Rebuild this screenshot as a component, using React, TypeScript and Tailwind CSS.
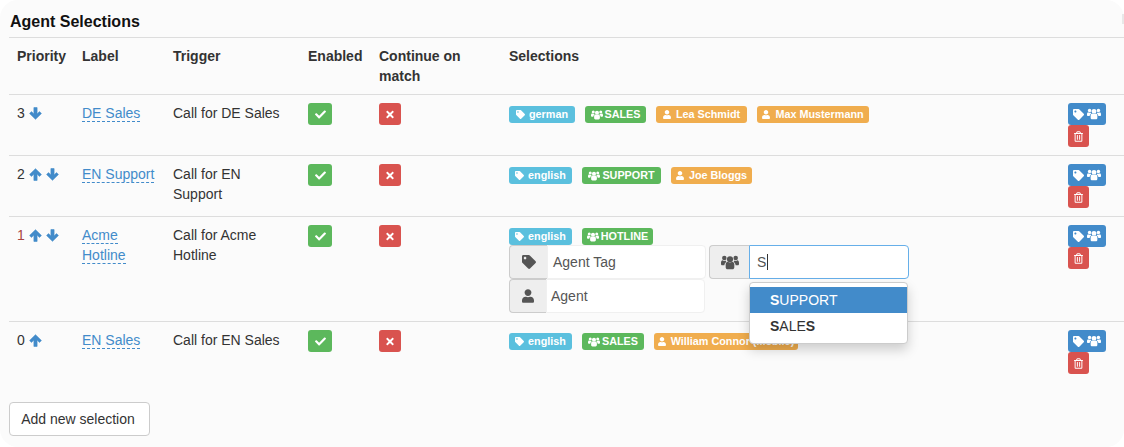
import React from "react";
import { FaTag, FaUser, FaCheck, FaTimes, FaRegTrashAlt } from "react-icons/fa";

function Users({ className }: { className?: string }) {
  return (
    <svg viewBox="0 0 20 16" className={className} fill="currentColor">
      <circle cx="10" cy="4.4" r="3.4" />
      <circle cx="3.7" cy="3" r="2.5" />
      <circle cx="16.300" cy="3" r="2.5" />
      <path d="M5.200 10.200c0-1.900 1.200-3 2.500-3 .6.500 1.400.900 2.300.900s1.700-.4 2.300-.9c1.300 0 2.500 1.100 2.500 3v3c0 1.400-.9 2.300-2.200 2.300H7.400c-1.300 0-2.200-.9-2.200-2.300z" />
      <path d="M0 8.400C0 6.500.8 5.400 1.800 5.400c.6.500 1.300.8 2 .8.500 0 1-.1 1.400-.3.1.6.4 1.200.8 1.600-1.200.5-2.100 1.800-2.200 3.500H1.400C.6 11 0 10.400 0 9.600z" />
      <path d="M20 8.400c0-1.900-.8-3-1.800-3-.6.500-1.300.8-2 .8-.5 0-1-.1-1.400-.3-.1.6-.4 1.200-.8 1.600 1.200.5 2.100 1.800 2.200 3.500h2.400c.8 0 1.400-.6 1.400-1.400z" />
    </svg>
  );
}

function ArrowUp({ className }: { className?: string }) {
  return (
    <svg viewBox="0 0 13 13" className={className} fill="currentColor" stroke="currentColor" strokeWidth="0.6" strokeLinejoin="round">
      <path d="M6.500 0.700 12.400 6.500 10.500 8.400 8.100 6V12.400H4.900V6L2.500 8.400 0.600 6.500Z" />
    </svg>
  );
}

function ArrowDown({ className }: { className?: string }) {
  return (
    <svg viewBox="0 0 13 13" className={className} fill="currentColor" stroke="currentColor" strokeWidth="0.6" strokeLinejoin="round">
      <path d="M6.500 12.300 12.400 6.500 10.500 4.600 8.100 7V0.600H4.900V7L2.500 4.600 0.600 6.500Z" />
    </svg>
  );
}

type Kind = "tag" | "group" | "agent";

function Label({ kind, text, w }: { kind: Kind; text: string; w: string }) {
  const bg = kind === "tag" ? "bg-[#5bc0de]" : kind === "group" ? "bg-[#5cb85c]" : "bg-[#f0ad4e]";
  return (
    <span className={`inline-flex h-[17px] items-center justify-center rounded-[3px] text-[10.8px] leading-none font-bold whitespace-nowrap text-white ${bg} ${w}`}>
      {kind === "tag" && <FaTag className="mr-[4px] h-[9px] w-[9px]" />}
      {kind === "group" && <Users className="mr-[2px] h-[10px] w-[12px]" />}
      {kind === "agent" && <FaUser className="mr-[5px] h-[9px] w-[8px]" />}
      {text}
    </span>
  );
}

function Check() {
  return (
    <span className="flex h-[22px] w-[24px] items-center justify-center rounded-[3px] bg-[#5cb85c] text-white">
      <FaCheck className="h-[11px] w-[11px]" />
    </span>
  );
}

function Cross() {
  return (
    <span className="flex h-[22px] w-[22px] items-center justify-center rounded-[3px] bg-[#d9534f] text-white">
      <FaTimes className="h-[11px] w-[10px]" />
    </span>
  );
}

function Actions() {
  return (
    <div className="flex flex-col items-start">
      <span className="flex h-[22px] w-[38px] items-center justify-center gap-[3px] rounded-[3px] bg-[#428bca] text-white">
        <FaTag className="h-[11px] w-[11px]" />
        <Users className="h-[12px] w-[14px]" />
      </span>
      <span className="flex h-[22px] w-[21px] items-center justify-center rounded-[3px] bg-[#d9534f] text-white">
        <FaRegTrashAlt className="h-[11px] w-[9px]" />
      </span>
    </div>
  );
}

function Priority({ n, up, down, red }: { n: number; up?: boolean; down?: boolean; red?: boolean }) {
  return (
    <div className="flex h-5 items-center">
      <span className={red ? "text-[#a94442]" : ""}>{n}</span>
      {up && <ArrowUp className="ml-[4px] h-[13px] w-[13px] text-[#428bca]" />}
      {down && <ArrowDown className="ml-[4px] h-[13px] w-[13px] text-[#428bca]" />}
    </div>
  );
}

function Editable({ children }: { children: React.ReactNode }) {
  return <a className="border-b border-dashed border-[#428bca] text-[#428bca]">{children}</a>;
}

function InputGroup({ icon, text, focus, width, addon, pad }: { icon: React.ReactNode; text: React.ReactNode; focus?: boolean; width: string; addon: string; pad: string }) {
  return (
    <div className={`flex h-[34px] ${width}`}>
      <span className={`flex shrink-0 items-center justify-center rounded-l-[4px] border border-r-0 border-[#ccc] bg-[#eee] text-[#555] ${addon}`}>
        {icon}
      </span>
      <div className={`flex flex-1 items-center rounded-r-[4px] border bg-white text-[#555] ${pad} ${focus ? "border-[#66afe9]" : "border-[#f0f0f0]"}`}>
        {text}
      </div>
    </div>
  );
}

const rows = [
  {
    p: <Priority n={3} down />, label: "DE Sales", trigger: "Call for DE Sales", h: "h-[61px]",
    tags: [["tag", "german", "w-[66px]"], ["group", "SALES", "w-[61px]"], ["agent", "Lea Schmidt", "w-[91px]"], ["agent", "Max Mustermann", "w-[112px]"]] as [Kind, string, string][],
  },
  {
    p: <Priority n={2} up down />, label: "EN Support", trigger: "Call for EN Support", h: "h-[61px]",
    tags: [["tag", "english", "w-[63px]"], ["group", "SUPPORT", "w-[79px]"], ["agent", "Joe Bloggs", "w-[81px]"]] as [Kind, string, string][],
  },
  {
    p: <Priority n={1} up down red />, label: "Acme Hotline", trigger: "Call for Acme Hotline", h: "h-[105px]", editor: true,
    tags: [["tag", "english", "w-[63px]"], ["group", "HOTLINE", "w-[71px]"]] as [Kind, string, string][],
  },
  {
    p: <Priority n={0} up />, label: "EN Sales", trigger: "Call for EN Sales", h: "h-[61px]",
    tags: [["tag", "english", "w-[63px]"], ["group", "SALES", "w-[62px]"], ["agent", "William Connor (Mobile)", "w-[144px]"]] as [Kind, string, string][],
  },
];

export default function App() {
  return (
    <div className="h-[447px] w-[1124px] overflow-hidden bg-white font-['Liberation_Sans',sans-serif] text-sm leading-5 text-[#333]">
      <div className="relative flex h-full flex-col rounded-[18px] bg-[#fbfbfb] pt-[12px] pl-[9px]">
        <span className="absolute top-[14px] right-0 h-[10px] w-[2px] bg-[#e8e8e8]" />
        <h3 className="mb-[6px] pl-px text-base leading-[19px] font-bold text-[#111]">Agent Selections</h3>
        <table className="w-[1115px] table-fixed border-collapse">
          <colgroup>
            <col className="w-[65px]" />
            <col className="w-[91px]" />
            <col className="w-[135px]" />
            <col className="w-[71px]" />
            <col className="w-[130px]" />
            <col className="w-[559px]" />
            <col className="w-[64px]" />
          </colgroup>
          <thead>
            <tr className="h-[57px] border-t border-[#ddd] text-left font-bold">
              <th className="p-2 align-top">Priority</th>
              <th className="p-2 align-top">Label</th>
              <th className="p-2 align-top">Trigger</th>
              <th className="p-2 align-top">Enabled</th>
              <th className="p-2 align-top">Continue on match</th>
              <th className="p-2 align-top">Selections</th>
              <th className="p-2 align-top"></th>
            </tr>
          </thead>
          <tbody>
            {rows.map((r) => (
              <tr key={r.label} className={`border-t border-[#ddd] ${r.h}`}>
                <td className="p-2 align-top">{r.p}</td>
                <td className="p-2 align-top"><Editable>{r.label}</Editable></td>
                <td className="p-2 align-top">{r.trigger}</td>
                <td className="p-2 align-top"><Check /></td>
                <td className="p-2 align-top"><Cross /></td>
                <td className="relative p-2 align-top">
                  <div className="mt-[3px] flex gap-[10px]">
                    {r.tags.map(([k, t, w]) => <Label key={t} kind={k} text={t} w={w} />)}
                  </div>
                  {r.editor && (
                    <div className="relative">
                      <div className="flex gap-[3px]">
                        <InputGroup width="w-[197px]" addon="w-[38px]" pad="pl-[5px]" icon={<FaTag className="h-[14px] w-[14px]" />} text="Agent Tag" />
                        <InputGroup width="w-[200px]" addon="w-[40px]" pad="pl-[7px]" focus icon={<Users className="h-[15px] w-[18px]" />}
                          text={<><span>S</span><span className="ml-px h-[16px] w-px bg-[#333]" /></>} />
                      </div>
                      <InputGroup width="w-[196px]" addon="w-[37px]" pad="pl-[4px]" icon={<FaUser className="h-[14px] w-[12px]" />} text="Agent" />
                      <div className="absolute top-[37px] left-[240px] z-10 h-[62px] w-[159px] rounded-[4px] border border-[#ccc] bg-white py-[4px] shadow-[0_6px_12px_rgba(0,0,0,0.18)]">
                        <div className="flex h-[26px] items-center bg-[#428bca] pl-[20px] text-white"><b>S</b>UPPORT</div>
                        <div className="flex h-[26px] items-center pl-[20px] text-[#333]"><b>S</b>ALE<b>S</b></div>
                      </div>
                    </div>
                  )}
                </td>
                <td className="p-2 align-top"><Actions /></td>
              </tr>
            ))}
          </tbody>
        </table>
        <button className="mt-[19px] h-[34px] w-[141px] rounded-[4px] border border-[#ccc] bg-white pr-[3px] text-sm text-[#333]">Add new selection</button>
      </div>
    </div>
  );
}
